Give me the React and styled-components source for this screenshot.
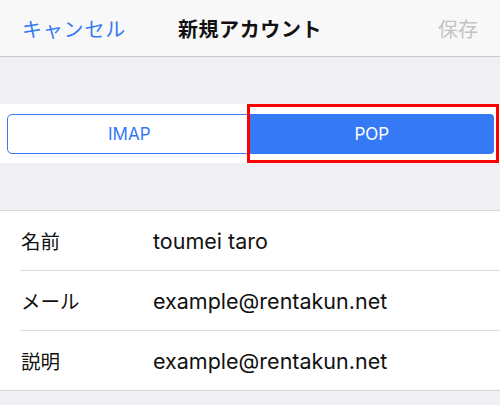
import styled, { createGlobalStyle } from 'styled-components';

const GlobalStyle = createGlobalStyle`
  html, body {
    margin: 0;
    padding: 0;
    background: #efeff4;
  }
  body {
    font-family: Inter, 'Noto Sans CJK JP', sans-serif;
    -webkit-font-smoothing: antialiased;
  }
`

const Screen = styled.div`
  width: 500px;
  height: 405px;
  background: #efeff4;
  overflow: hidden;
`

const NavBar = styled.header`
  height: 56px;
  display: grid;
  grid-template-columns: 1fr auto 1fr;
  align-items: center;
  padding: 0 22px 0 22px;
  background: #f8f8f8;
  border-bottom: 1px solid #c9c8cd;
  font-family: 'Noto Sans CJK JP', sans-serif;
  font-size: 20px;
`

const NavButton = styled.span`
  color: ${p => (p.disabled ? '#c3c3c6' : '#3579f6')};
  justify-self: ${p => (p.end ? 'end' : 'start')};
  letter-spacing: ${p => (p.end ? '0' : '0.8px')};
`

const NavTitle = styled.h1`
  margin: 0;
  font-size: 20px;
  font-weight: 700;
  color: #111;
  letter-spacing: 0.6px;
`

const SegmentStrip = styled.div`
  margin-top: 47px;
  background: #fff;
  padding: 10px 6px 9px 7px;
`

const SegmentGroup = styled.div`
  display: flex;
  height: 40px;
  border: 1px solid #3579f6;
  border-radius: 5px;
  box-sizing: border-box;
`

const Segment = styled.div`
  position: relative;
  flex: 1;
  display: flex;
  align-items: center;
  justify-content: center;
  font-size: 17px;
  color: ${p => (p.active ? '#fff' : '#3579f6')};
  background: ${p => (p.active ? '#3579f6' : 'transparent')};
  border-radius: ${p => (p.active ? '0 4px 4px 0' : '4px 0 0 4px')};
  margin: -1px;
`

const Highlight = styled.div`
  position: absolute;
  top: -10px;
  bottom: -9px;
  left: -3px;
  right: -5px;
  border: 3px solid #ff0000;
  pointer-events: none;
`

const List = styled.section`
  margin-top: 47px;
  background: #fff;
  border-top: 1px solid #d6d6da;
  border-bottom: 1px solid #d6d6da;
`

const Row = styled.div`
  display: grid;
  grid-template-columns: 131px 1fr;
  align-items: center;
  height: 59px;
  margin-left: 20px;
  padding-left: 1px;
  border-top: ${p => (p.first ? 'none' : '1px solid #dcdcde')};
`

const Label = styled.span`
  font-family: 'Noto Sans CJK JP', sans-serif;
  font-size: 19.5px;
  color: #111;
`

const Value = styled.span`
  font-family: Inter, 'Noto Sans CJK JP', sans-serif;
  font-size: 21.5px;
  color: #111;
  padding-left: 1px;
`

const rows = [
  { label: '名前', value: 'toumei taro' },
  { label: 'メール', value: 'example@rentakun.net' },
  { label: '説明', value: 'example@rentakun.net' },
]

const App = () => {
  return (
    <Screen>
      <GlobalStyle />
      <NavBar>
        <NavButton>キャンセル</NavButton>
        <NavTitle>新規アカウント</NavTitle>
        <NavButton end disabled>保存</NavButton>
      </NavBar>

      <SegmentStrip>
        <SegmentGroup>
          <Segment>IMAP</Segment>
          <Segment active>
            POP
            <Highlight />
          </Segment>
        </SegmentGroup>
      </SegmentStrip>

      <List>
        {rows.map((r, i) => (
          <Row key={r.label} first={i === 0}>
            <Label>{r.label}</Label>
            <Value>{r.value}</Value>
          </Row>
        ))}
      </List>
    </Screen>
  )
}

export default App
